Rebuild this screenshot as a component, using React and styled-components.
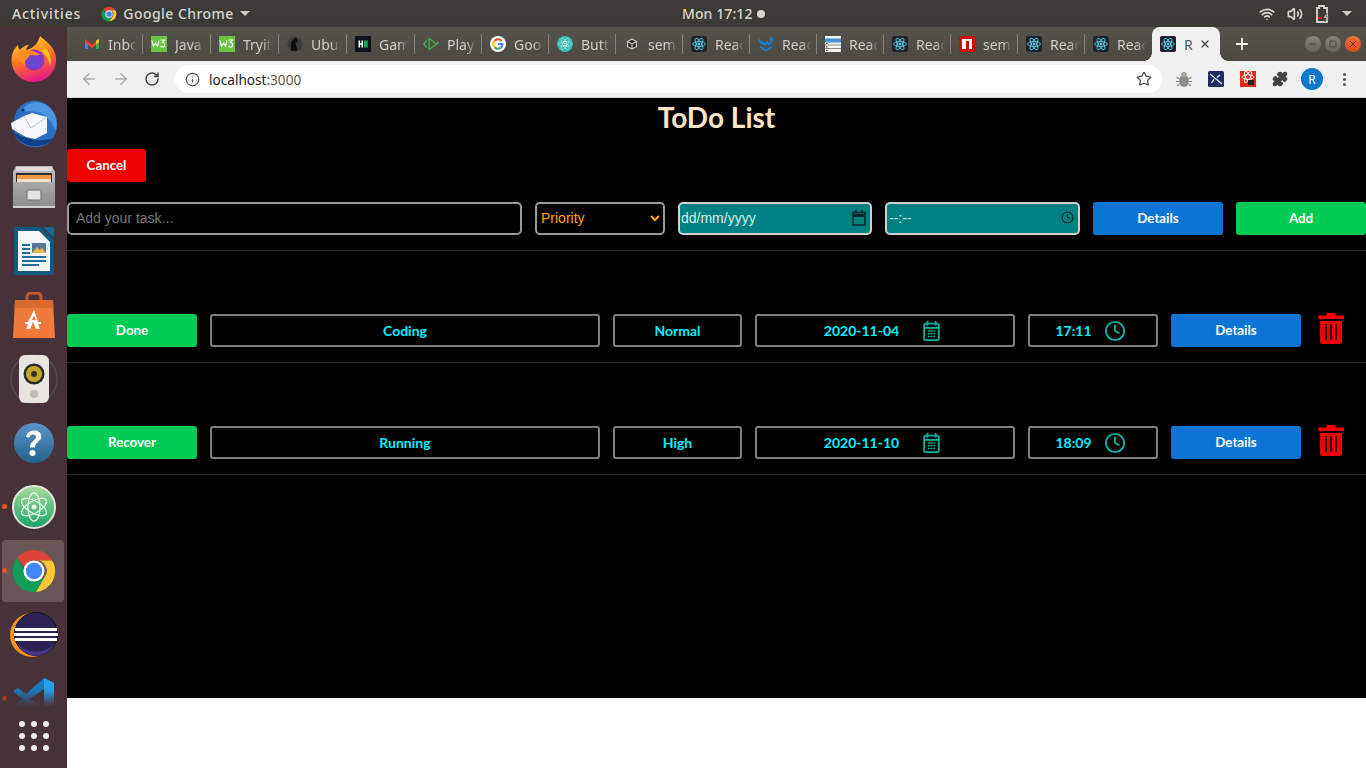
import React from 'react'
import styled, { createGlobalStyle } from 'styled-components'
import { ArrowLeft, ArrowRight, RotateCw, Info, Star, Puzzle, X, Plus, Minus, Square, Wifi, Volume2, Clock } from 'lucide-react'

const GlobalStyle = createGlobalStyle`
  html, body { margin: 0; padding: 0; background: #fff; overflow: hidden; }
  * { box-sizing: border-box; }
`

const Desktop = styled.div`
  width: 1366px;
  height: 768px;
  display: grid;
  grid-template-columns: 67px 1fr;
  grid-template-rows: 27px 1fr;
  overflow: hidden;
`
const TopBar = styled.header`
  grid-column: 1 / 3;
  display: flex;
  align-items: center;
  background: linear-gradient(#3d3c38, #3a3935);
  color: #d8d6d0;
  font: 500 14px "Noto Sans", sans-serif;
  letter-spacing: 0.45px;
`
const TopLeft = styled.div`
  flex: 0 0 682px;
  display: flex;
  align-items: center;
  padding-left: 12px;
`
const Activities = styled.span`
  letter-spacing: 0.9px;
`
const AppName = styled.div`
  display: flex;
  align-items: center;
  gap: 6px;
  margin-left: 20px;
`
const Caret = styled.span`
  width: 0;
  height: 0;
  border-left: 5px solid transparent;
  border-right: 5px solid transparent;
  border-top: 5px solid #d0cec8;
`
const ClockText = styled.div`
  display: flex;
  align-items: center;
  gap: 4px;
  letter-spacing: 0.1px;
`
const ClockDot = styled.span`
  width: 8px;
  height: 8px;
  border-radius: 50%;
  background: #d8d6d0;
`
const Tray = styled.div`
  margin-left: auto;
  display: flex;
  align-items: center;
  gap: 12px;
  padding-right: 14px;
  color: #d8d6d0;
`

const Dock = styled.nav`
  position: relative;
  display: flex;
  flex-direction: column;
  background: #48323a;
  overflow: hidden;
`
const DockItem = styled.div`
  position: relative;
  flex: 0 0 64px;
  display: flex;
  align-items: center;
  justify-content: center;
  &::before {
    content: '';
    position: absolute;
    inset: 1px 3px 1px 2px;
    border-radius: 4px;
    background: ${p => (p.$active ? '#6a5659' : 'transparent')};
  }
  &::after {
    content: '';
    position: absolute;
    left: 2px;
    top: 29px;
    width: 5px;
    height: 5px;
    border-radius: 50%;
    background: ${p => (p.$running ? '#e95420' : 'transparent')};
  }
  svg { position: relative; }
`
const DockFade = styled.div`
  position: absolute;
  left: 0;
  right: 0;
  bottom: 0;
  height: 78px;
  background: linear-gradient(rgba(72, 50, 58, 0), #48323a 16px);
  display: flex;
  align-items: center;
  justify-content: center;
  padding-top: 14px;
`
const AppGrid = styled.div`
  display: grid;
  grid-template-columns: repeat(3, 6px);
  gap: 6px;
`
const GridDot = styled.span`
  width: 6px;
  height: 6px;
  border-radius: 50%;
  background: #eeeceb;
`

const Browser = styled.div`
  display: flex;
  flex-direction: column;
  min-width: 0;
`
const TabStrip = styled.div`
  height: 34px;
  display: flex;
  align-items: center;
  padding-left: 9px;
  background: linear-gradient(#55534b, #4b4941);
`
const Tab = styled.div`
  position: relative;
  flex: 0 0 ${p => (p.$wide ? 68 : 67)}px;
  height: 34px;
  display: flex;
  align-items: center;
  gap: 8px;
  padding-left: 8px;
  color: #cfcdc8;
  font: 400 14px "Noto Sans", sans-serif;
  white-space: nowrap;
  overflow: hidden;
  &::after {
    content: '';
    position: absolute;
    right: 0;
    top: 7px;
    bottom: 7px;
    width: 1px;
    background: ${p => (p.$last ? 'transparent' : '#85837c')};
  }
  svg { flex: none; }
`
const TabTitle = styled.span`
  display: block;
  width: 29px;
  overflow: hidden;
  -webkit-mask-image: linear-gradient(90deg, #000 68%, transparent);
  mask-image: linear-gradient(90deg, #000 68%, transparent);
`
const ActiveTab = styled.div`
  position: relative;
  flex: 0 0 68px;
  height: 34px;
  display: flex;
  align-items: center;
  gap: 8px;
  padding-left: 8px;
  background: #f1f1f1;
  border-radius: 8px 8px 0 0;
  color: #555;
  font: 400 14px "Noto Sans", sans-serif;
  svg { flex: none; }
  &::before, &::after {
    content: '';
    position: absolute;
    bottom: 0;
    width: 8px;
    height: 8px;
  }
  &::before {
    left: -8px;
    background: radial-gradient(circle at 0 0, transparent 7.5px, #f1f1f1 8px);
  }
  &::after {
    right: -8px;
    background: radial-gradient(circle at 100% 0, transparent 7.5px, #f1f1f1 8px);
  }
`
const ActiveTitle = styled.span`
  width: 7px;
`
const NewTab = styled.div`
  display: flex;
  margin-left: 13px;
  color: #eeeeea;
`
const WindowButtons = styled.div`
  margin-left: auto;
  display: flex;
  gap: 4px;
  padding-right: 5px;
`
const WindowButton = styled.span`
  width: 16px;
  height: 16px;
  border-radius: 50%;
  display: flex;
  align-items: center;
  justify-content: center;
  background: ${p => (p.$close ? 'linear-gradient(#f0703c, #de4a14)' : 'linear-gradient(#85837c, #65635c)')};
  color: ${p => (p.$close ? '#5a2008' : '#3c3b37')};
`
const Toolbar = styled.div`
  height: 37px;
  display: flex;
  align-items: center;
  background: #f1f1f1;
  border-bottom: 1px solid #cfcfcf;
  padding-left: 13px;
`
const NavButton = styled.span`
  flex: 0 0 32px;
  display: flex;
  color: ${p => (p.$off ? '#a9a9a9' : '#4a4a4a')};
`
const Omnibox = styled.div`
  flex: 0 0 987px;
  height: 28px;
  margin-left: -1px;
  display: flex;
  align-items: center;
  gap: 9px;
  padding: 0 10px;
  border-radius: 14px;
  background: #fff;
  color: #555;
  font: 400 13.6px "Noto Sans", sans-serif;
`
const Host = styled.span`
  color: #222;
`
const Url = styled.span`
  flex: 1;
`
const Extensions = styled.div`
  display: flex;
  align-items: center;
  margin-left: 6px;
`
const ExtSlot = styled.span`
  flex: 0 0 32px;
  display: flex;
  align-items: center;
  justify-content: center;
`
const Avatar = styled.span`
  width: 22px;
  height: 22px;
  border-radius: 50%;
  background: #0b78d0;
  color: #fff;
  display: flex;
  align-items: center;
  justify-content: center;
  font: 400 12px "Noto Sans", sans-serif;
`
const Kebab = styled.span`
  display: grid;
  gap: 2px;
`
const KebabDot = styled.span`
  width: 3px;
  height: 3px;
  border-radius: 50%;
  background: #555;
`

const Page = styled.main`
  height: 600px;
  background: #000;
`
const Title = styled.h1`
  margin: 0;
  height: 39px;
  text-align: center;
  color: #ffe4c4;
  font: 700 28px/39px Lato, sans-serif;
`
const Button = styled.button`
  height: 33px;
  border: 0;
  border-radius: 3px;
  color: #fff;
  background: ${p => ({ red: '#ee0000', green: '#00cc55', blue: '#0a75d4' }[p.$tone])};
  font: 700 13.33px Lato, sans-serif;
  padding: 0 0 2px;
`
const CancelRow = styled.div`
  padding-top: 12px;
  display: flex;
`
const CancelButton = styled(Button)`
  width: 79px;
`
const TaskForm = styled.form`
  display: grid;
  grid-template-columns: 455px 130px 194px 195px 130px 130px;
  gap: 13px;
  margin: 20px 0 0;
  padding-bottom: 15px;
  border-bottom: 1px solid #222;
`
const TaskInput = styled.input`
  height: 33px;
  padding: 0 7px 2px;
  background: #000;
  border: 2px solid #9a9a9a;
  border-radius: 5px;
  color: #fff;
  font: 400 14px "Liberation Sans", sans-serif;
  &::placeholder { color: #757575; opacity: 1; }
`
const PrioritySelect = styled.select`
  height: 33px;
  padding: 0 0 2px;
  background: #000;
  border: 2px solid #9a9a9a;
  border-radius: 5px;
  color: #ffa500;
  font: 400 14px "Liberation Sans", sans-serif;
`
const PickerField = styled.div`
  height: 33px;
  display: flex;
  align-items: center;
  justify-content: space-between;
  padding: 0 4px 2px ${p => p.$pad}px;
  background: #008080;
  border: 2px solid #d0d0d0;
  border-radius: 5px;
  color: #d5eeee;
  font: 400 14px "Liberation Sans", sans-serif;
`
const TaskRow = styled.div`
  display: grid;
  grid-template-columns: 130px 390px 129px 260px 130px 130px 1fr;
  gap: 13px;
  align-items: center;
  padding: 63px 0 15px;
  border-bottom: 1px solid #222;
`
const Cell = styled.div`
  height: 33px;
  display: flex;
  align-items: center;
  justify-content: center;
  gap: ${p => p.$gap || 0}px;
  padding-right: ${p => (p.$gap ? 5 : 0)}px;
  border: 2px solid #808080;
  border-radius: 3px;
  color: #00f0ff;
  font: 700 14px Lato, sans-serif;
`
const TrashButton = styled.span`
  display: flex;
  margin: -5px 0 0 4px;
`

const ReactIcon = () => (
  <svg width="16" height="16" viewBox="0 0 16 16">
    <rect width="16" height="16" rx="2" fill="#20232a" />
    <g fill="none" stroke="#61dafb" strokeWidth=".8">
      <ellipse cx="8" cy="8" rx="6.4" ry="2.5" />
      <ellipse cx="8" cy="8" rx="6.4" ry="2.5" transform="rotate(60 8 8)" />
      <ellipse cx="8" cy="8" rx="6.4" ry="2.5" transform="rotate(120 8 8)" />
    </g>
    <circle cx="8" cy="8" r="1.3" fill="#61dafb" />
  </svg>
)
const GmailIcon = () => (
  <svg width="16" height="16" viewBox="0 0 16 16">
    <path d="M1 3v10h3V7z" fill="#4285f4" />
    <path d="M15 3v10h-3V7z" fill="#34a853" />
    <path d="M1 3l7 5.5L15 3v3.5L8 12 1 6.500z" fill="#ea4335" />
    <path d="M12 4.500L15 3v3.500l-3 2.200z" fill="#fbbc04" />
  </svg>
)
const W3Icon = () => (
  <svg width="16" height="16" viewBox="0 0 16 16">
    <rect width="16" height="16" fill="#6ac43f" />
    <path d="M1 4.500c.5 3 1 4 1.500 5.500L4.500 7l2 3 1.500-5.500M9.500 4h4l-2 2.500c3 0 2.800 5-.2 4.500-.8-.1-1.500-.6-1.800-1.300" fill="none" stroke="#fff" strokeWidth="1.200" />
  </svg>
)
const UbuIcon = () => (
  <svg width="16" height="16" viewBox="0 0 16 16">
    <circle cx="8" cy="8" r="7.500" fill="#3a3a38" />
    <path d="M4 15c.5-4-1-7 1-10 1.500-2.500 4-3.500 5-2.500-.5 1 .5 2 1 3.500-1 .5-2 0-2.500.5-.5 2 2 5 2 8z" fill="#0c0c0c" />
  </svg>
)
const HackIcon = () => (
  <svg width="16" height="16" viewBox="0 0 16 16">
    <rect width="16" height="16" fill="#0e141e" />
    <path d="M3.500 4.500h1.600v2.700h1.400V4.500h1.600v7H6.500V8.800H5.100v2.700H3.500z" fill="#fff" />
    <rect x="9" y="4.500" width="3.800" height="7" fill="#1ba94c" />
  </svg>
)
const PlayIcon = () => (
  <svg width="16" height="16" viewBox="0 0 16 16" fill="none" stroke="#4caf50" strokeWidth="1.300">
    <path d="M3.500 4.500L.8 8l2.700 3.500" />
    <path d="M6 2.500v11L13.500 8zM15.500 6l-1.500 2" />
  </svg>
)
const GoogleIcon = () => (
  <svg width="16" height="16" viewBox="0 0 16 16">
    <circle cx="8" cy="8" r="8" fill="#fff" />
    <g fill="none" strokeWidth="2">
      <path d="M11.600 5a4.500 4.500 0 0 0-7-.2" stroke="#ea4335" />
      <path d="M4.600 4.800a4.500 4.500 0 0 0 0 6.400" stroke="#fbbc04" />
      <path d="M4.600 11.200a4.500 4.500 0 0 0 6.200.4" stroke="#34a853" />
      <path d="M8 8h4.500c0 1.500-.6 2.800-1.700 3.600" stroke="#4285f4" />
    </g>
  </svg>
)
const SemanticIcon = () => (
  <svg width="16" height="16" viewBox="0 0 16 16">
    <circle cx="8" cy="8" r="8" fill="#35bdb2" />
    <g fill="none" stroke="#a5e8e2" strokeWidth=".6">
      <ellipse cx="8" cy="8" rx="6.500" ry="2.500" />
      <ellipse cx="8" cy="8" rx="6.500" ry="2.500" transform="rotate(60 8 8)" />
      <ellipse cx="8" cy="8" rx="6.500" ry="2.500" transform="rotate(120 8 8)" />
    </g>
    <path d="M10 6c-1.500-1.200-3.800-.8-3.500.6.300 1.300 3.500.8 3.400 2.300-.1 1.400-2.700 1.500-4 .2" fill="none" stroke="#fff" strokeWidth="1" />
  </svg>
)
const CubeIcon = () => (
  <svg width="16" height="16" viewBox="0 0 16 16">
    <path d="M8 3l4.500 2.500v5L8 13l-4.500-2.500v-5z" fill="#2c2c2a" stroke="#ccc" strokeWidth="1.100" />
    <path d="M3.500 5.500L8 8l4.500-2.500M8 8v5" fill="none" stroke="#ccc" strokeWidth="1.100" />
  </svg>
)
const MuiIcon = () => (
  <svg width="16" height="16" viewBox="0 0 16 16" fill="#0f7fd6">
    <path d="M0 2.500l3 2v3L0 5.500zM3 4.500l3.500 2.500v3L3 7.500zM10 7l4-3v3l-4 3zM6.500 7L10 4.500v3L6.500 10zM12 1.500h3v3h-3zM2 9.500L8 13.500l6-4v2.200l-6 3.800-6-3.800z" />
  </svg>
)
const TableIcon = () => (
  <svg width="16" height="16" viewBox="0 0 16 16">
    <rect width="16" height="16" fill="#f5f5f5" />
    <rect y="2.500" width="16" height="4" fill="#4a90d9" />
    <rect y="8.500" width="16" height="1" fill="#888" />
    <rect y="12" width="16" height="1" fill="#888" />
    <rect x="1" y="7" width="1.500" height="1" fill="#333" />
    <rect x="1" y="10.500" width="1.500" height="1" fill="#333" />
    <rect x="1" y="14" width="1.500" height="1" fill="#333" />
  </svg>
)
const NpmIcon = () => (
  <svg width="16" height="16" viewBox="0 0 16 16">
    <rect width="16" height="16" fill="#cb0f0f" />
    <rect x="3" y="3" width="10" height="10" fill="#fff" />
    <rect x="7" y="5" width="3" height="8" fill="#cb0f0f" />
  </svg>
)
const ChromeIcon = ({ size = 16 }) => (
  <svg width={size} height={size} viewBox="0 0 48 48">
    <path d="M24 2a22 22 0 0 1 19 11H24a11 11 0 0 0-10 6.500L6.500 10.500A22 22 0 0 1 24 2z" fill="#db4437" />
    <path d="M26 46A22 22 0 0 1 6.500 10.500L15 26a11 11 0 0 0 11 9l8.500-4z" fill="#0f9d58" />
    <path d="M24 13h19a22 22 0 0 1-17 33l9-15.500A11 11 0 0 0 24 13z" fill="#fcc934" />
    <circle cx="24" cy="24" r="11" fill="#fff" />
    <circle cx="24" cy="24" r="8.500" fill="#4285f4" />
  </svg>
)
const BugIcon = () => (
  <svg width="18" height="18" viewBox="0 0 18 18" fill="#8a8a86">
    <ellipse cx="9" cy="11" rx="5" ry="6" />
    <circle cx="9" cy="4.500" r="2.800" fill="#a5a5a0" />
    <path d="M1.500 7l3 2M16.500 7l-3 2M1 11.500h3M17 11.500h-3M2 16l2.500-2M16 16l-2.500-2" stroke="#8a8a86" strokeWidth="1.200" />
  </svg>
)
const PlaneExt = () => (
  <svg width="16" height="16" viewBox="0 0 16 16">
    <rect width="16" height="16" rx="1.500" fill="#1a2f63" />
    <path d="M2 3l12 10M6 8L3.500 12M9 6.500l3-2.500" stroke="#e9edf5" strokeWidth="1.200" />
  </svg>
)
const RedExt = () => (
  <svg width="16" height="16" viewBox="0 0 16 16">
    <rect width="16" height="16" fill="#e4291c" />
    <g fill="none" stroke="#fff" strokeWidth=".9">
      <ellipse cx="8" cy="6" rx="6" ry="2.400" />
      <ellipse cx="8" cy="6" rx="6" ry="2.400" transform="rotate(60 8 6)" />
      <ellipse cx="8" cy="6" rx="6" ry="2.400" transform="rotate(120 8 6)" />
    </g>
    <rect x="8" y="9" width="6" height="5" fill="#222" />
  </svg>
)
const BatteryIcon = () => (
  <svg width="15" height="18" viewBox="0 0 15 18">
    <path d="M4 1h5v2h3v14H2V3h2z" fill="none" stroke="#d8d6d0" strokeWidth="1.800" />
    <rect x="3" y="12" width="4" height="2" fill="#e01b24" />
    <path d="M12 8l-4 5h3l-1 4 4-5h-3z" fill="#d8d6d0" stroke="#3b3a36" strokeWidth=".5" />
  </svg>
)

const FirefoxDock = () => (
  <svg width="46" height="46" viewBox="0 0 46 46">
    <defs>
      <linearGradient id="ffA" x1="0.300" y1="0" x2="0.600" y2="1">
        <stop offset="0" stopColor="#ffe226" />
        <stop offset=".45" stopColor="#ff7a1f" />
        <stop offset="1" stopColor="#e3158a" />
      </linearGradient>
      <radialGradient id="ffB" cx=".5" cy=".6" r=".6">
        <stop offset="0" stopColor="#5a4fd6" />
        <stop offset="1" stopColor="#9a2fc0" />
      </radialGradient>
    </defs>
    <path d="M29 0c5 5 15 10 16 22 1 13-9 24-22 24S0 36 .5 23C1 17 3 13 7 9c0 3 1 4 2 5 2-3 6-5 9-5-2 2-3 4-3 5 6-1 12-6 14-14z" fill="url(#ffA)" />
    <circle cx="23" cy="24" r="10.500" fill="url(#ffB)" />
    <path d="M7 18c4-4 11-5 15-3 3 1 5 3 8 3-3 2-8 1-10 1-1 0-3 1-3 3-3 2-4 5-2 8-5-3-9-7-8-12z" fill="#ff8a1f" />
    <path d="M34 12c5 4 7 11 5 18-1-6-4-12-9-15z" fill="#ffc51f" />
  </svg>
)
const ThunderbirdDock = () => (
  <svg width="48" height="50" viewBox="0 0 48 50">
    <path d="M4 24C4 10 16 1 28 3c10 2 19 11 19 22 0 8-3 16-9 21-8 5-24 5-32-6-2-4-2-11-2-16z" fill="#2a6fc4" />
    <path d="M12 12C18 3 32 1 41 11c5 6 7 14 5 22-4-9-10-17-20-19-6-1-10 0-14-2z" fill="#4d96e0" />
    <path d="M2 32c3 9 12 16 22 16 8 0 14-1 20-8-12 4-30 3-42-8z" fill="#123e82" />
    <path d="M1 25l13-7 8-3 15 4 0 16-12 6-9-2-14-8z" fill="#f6f7fb" />
    <path d="M14 18l7 12 16-11" fill="none" stroke="#b9c4d8" strokeWidth="1" />
    <circle cx="13" cy="12" r="1.500" fill="#0e2a55" />
  </svg>
)
const FilesDock = () => (
  <svg width="42" height="44" viewBox="0 0 42 44">
    <defs>
      <linearGradient id="filesFront" x1="0" y1="0" x2="0" y2="1">
        <stop offset="0" stopColor="#a9a9a7" />
        <stop offset="1" stopColor="#8c8c8a" />
      </linearGradient>
    </defs>
    <path d="M3 1h36l3 6v34H0V7z" fill="#b8b8b6" />
    <rect x="3" y="2" width="36" height="4" fill="#dcdcda" />
    <rect x="3" y="8" width="36" height="9" fill="#2b2b2b" />
    <rect x="4" y="10" width="34" height="7" fill="#ef9a4b" />
    <rect x="4" y="14" width="34" height="3" fill="#f6e3c8" />
    <rect x="0" y="17" width="42" height="26" rx="2" fill="url(#filesFront)" />
    <rect x="14" y="25" width="14" height="10" rx="1.500" fill="#e2e2e0" stroke="#6c6c6a" />
    <rect x="0" y="41" width="42" height="2" fill="#d0d0ce" />
  </svg>
)
const WriterDock = () => (
  <svg width="40" height="48" viewBox="0 0 40 48">
    <path d="M1 0h26l13 13v33a2 2 0 0 1-2 2H2a2 2 0 0 1-2-2V1z" fill="#0f5a80" />
    <path d="M4 4h21l11 11v29H4z" fill="#f4f6f8" />
    <path d="M29 0h9a2 2 0 0 1 2 2v9z" fill="#16689a" />
    <path d="M8 17h8v2H8zM8 21h8v2H8zM8 25h8v2H8zM8 29h24v2H8zM8 33h24v2H8zM8 37h17v2H8z" fill="#1b6f99" />
    <rect x="18" y="16" width="14" height="10" fill="#557a9c" />
    <path d="M18 26l5-6 3 3 2-2 4 5z" fill="#e9b949" />
  </svg>
)
const SoftwareDock = () => (
  <svg width="42" height="46" viewBox="0 0 42 46">
    <path d="M14 10V5a4 4 0 0 1 4-4h6a4 4 0 0 1 4 4v5" fill="none" stroke="#c85a2b" strokeWidth="3" />
    <path d="M2 8h38l2 38H0z" fill="#ef7a3c" />
    <path d="M2 8h38l.5 8H1.500z" fill="#d96a30" />
    <path d="M21 18l-6 12h-3v2h3l-2 5h4l3-7 3 7h4l-2-5h3v-2h-3zM19 28l2-4 2 4z" fill="#fff" />
  </svg>
)
const SpeakerDock = () => (
  <svg width="48" height="50" viewBox="0 0 48 50">
    <ellipse cx="24" cy="25" rx="23" ry="24" fill="none" stroke="#5d5870" strokeWidth="1.500" opacity=".6" />
    <rect x="9" y="1" width="30" height="48" rx="6" fill="#e7e6e0" />
    <circle cx="24" cy="20" r="10.500" fill="#2b2a26" />
    <circle cx="24" cy="20" r="8" fill="#c2a72b" />
    <circle cx="24" cy="20" r="3" fill="#35332c" />
    <circle cx="24" cy="40" r="4" fill="#bdbcb6" />
  </svg>
)
const HelpDock = () => (
  <svg width="42" height="42" viewBox="0 0 42 42">
    <defs>
      <linearGradient id="help" x1="0" y1="0" x2="0" y2="1">
        <stop offset="0" stopColor="#5d94c7" />
        <stop offset="1" stopColor="#23628f" />
      </linearGradient>
    </defs>
    <circle cx="21" cy="21" r="20" fill="url(#help)" />
    <path d="M13 15c1-5 5-7 9-6.500 5 .5 7 4 6 8-1 3-6 4-6 9h-5c0-6 5-7 6-10 .5-2-1-3-3-3-2 0-3 1-3.500 3z" fill="#fff" />
    <circle cx="19.500" cy="31" r="3" fill="#fff" />
  </svg>
)
const AtomDock = () => (
  <svg width="44" height="44" viewBox="0 0 44 44">
    <defs>
      <linearGradient id="atom" x1="0" y1="0" x2="0" y2="1">
        <stop offset="0" stopColor="#a7dd9d" />
        <stop offset="1" stopColor="#17a466" />
      </linearGradient>
    </defs>
    <circle cx="22" cy="22" r="21" fill="url(#atom)" stroke="#e5e5dd" strokeWidth="2" />
    <g fill="none" stroke="#eaf7e8" strokeWidth="1.300">
      <ellipse cx="22" cy="22" rx="14" ry="6" transform="rotate(30 22 22)" />
      <ellipse cx="22" cy="22" rx="14" ry="6" transform="rotate(90 22 22)" />
      <ellipse cx="22" cy="22" rx="14" ry="6" transform="rotate(150 22 22)" />
    </g>
    <circle cx="22" cy="22" r="2.500" fill="#eaf7e8" />
  </svg>
)
const EclipseDock = () => (
  <svg width="48" height="46" viewBox="0 0 48 46">
    <circle cx="22" cy="23" r="22" fill="#f7941e" />
    <circle cx="26" cy="22" r="21.500" fill="#2c2255" stroke="#111" />
    <path d="M7 30a20 20 0 0 0 38 0 20 14 0 0 1-38 0z" fill="#473788" />
    <path d="M5 16h42v3H5zM4 21h44v3H4zM5 26h42v3H5z" fill="#fff" />
  </svg>
)
const VSCodeDock = () => (
  <svg width="44" height="44" viewBox="0 0 44 44">
    <path d="M32 1l10 5v34l-10 4-18-17-8 6-5-3 9-8-9-8 5-3 8 6z" fill="#1a78bd" />
    <path d="M32 1l10 5v34l-10 4z" fill="#2b9de8" />
    <path d="M32 12L18 22l14 10z" fill="#48323a" />
  </svg>
)
const CalendarIcon = () => (
  <svg width="19" height="22" viewBox="0 0 20 24" fill="none" stroke="#00b5a5" strokeWidth="2">
    <rect x="2" y="4" width="16" height="18" rx="1.500" />
    <path d="M5.500 1v5M14.500 1v5M2 8.500h16" />
    <path d="M6 12h2M9 12h2M12 12h2M6 15h2M9 15h2M12 15h2M6 18h2M9 18h2M12 18h2" strokeWidth="1.600" />
  </svg>
)
const PickerCalendar = () => (
  <svg width="14" height="16" viewBox="0 0 14 16" fill="none" stroke="#04292c" strokeWidth="1.600">
    <rect x="1" y="2.500" width="12" height="12.500" />
    <path d="M1 5.500h12" strokeWidth="3" />
    <path d="M4 0v3M10 0v3" />
  </svg>
)
const TrashIcon = () => (
  <svg width="26" height="31" viewBox="0 0 26 31">
    <path d="M9 0h8l1 2.500h7a1 1 0 0 1 1 1V6H0V3.500a1 1 0 0 1 1-1h7z" fill="#ee0000" />
    <path d="M2 8h22v20.500a2.500 2.500 0 0 1-2.500 2.500h-17A2.500 2.500 0 0 1 2 28.500z" fill="#ee0000" />
    <path d="M8 11v16M13 11v16M18 11v16" stroke="#000" strokeWidth="1.600" />
  </svg>
)

const tabs = [
  { title: 'Inbox', Icon: GmailIcon },
  { title: 'Java', Icon: W3Icon, wide: true },
  { title: 'Tryit', Icon: W3Icon, wide: true },
  { title: 'Ubuntu', Icon: UbuIcon, wide: true },
  { title: 'Game', Icon: HackIcon, wide: true },
  { title: 'Play', Icon: PlayIcon },
  { title: 'Google', Icon: GoogleIcon },
  { title: 'Button', Icon: SemanticIcon },
  { title: 'semantic', Icon: CubeIcon },
  { title: 'React', Icon: ReactIcon },
  { title: 'React', Icon: MuiIcon },
  { title: 'React', Icon: TableIcon },
  { title: 'React', Icon: ReactIcon },
  { title: 'semantic', Icon: NpmIcon },
  { title: 'React', Icon: ReactIcon },
  { title: 'React', Icon: ReactIcon, last: true },
]

const dockApps = [
  { Icon: FirefoxDock },
  { Icon: ThunderbirdDock },
  { Icon: FilesDock },
  { Icon: WriterDock },
  { Icon: SoftwareDock },
  { Icon: SpeakerDock },
  { Icon: HelpDock },
  { Icon: AtomDock, running: true },
  { Icon: () => <ChromeIcon size={46} />, running: true, active: true },
  { Icon: EclipseDock },
  { Icon: VSCodeDock, running: true },
]

const tasks = [
  { action: 'Done', name: 'Coding', priority: 'Normal', date: '2020-11-04', time: '17:11' },
  { action: 'Recover', name: 'Running', priority: 'High', date: '2020-11-10', time: '18:09' },
]

const TaskLine = ({ action, name, priority, date, time }) => (
  <TaskRow>
    <Button $tone="green">{action}</Button>
    <Cell>{name}</Cell>
    <Cell>{priority}</Cell>
    <Cell $gap={23}>{date}<CalendarIcon /></Cell>
    <Cell $gap={12}>{time}<Clock size={22} color="#00b5a5" strokeWidth={2} /></Cell>
    <Button $tone="blue">Details</Button>
    <TrashButton><TrashIcon /></TrashButton>
  </TaskRow>
)

const App = () => (
  <Desktop>
    <GlobalStyle />
    <TopBar>
      <TopLeft>
        <Activities>Activities</Activities>
        <AppName>
          <ChromeIcon size={16} />
          Google Chrome
          <Caret />
        </AppName>
      </TopLeft>
      <ClockText>Mon 17:12 <ClockDot /></ClockText>
      <Tray>
        <Wifi size={16} strokeWidth={2.5} />
        <Volume2 size={16} strokeWidth={2.5} />
        <BatteryIcon />
        <Caret />
      </Tray>
    </TopBar>

    <Dock>
      {dockApps.map(({ Icon, running, active }, i) => (
        <DockItem key={i} $running={running} $active={active}><Icon /></DockItem>
      ))}
      <DockFade>
        <AppGrid>
          {Array.from({ length: 9 }, (_, i) => <GridDot key={i} />)}
        </AppGrid>
      </DockFade>
    </Dock>

    <Browser>
      <TabStrip>
        {tabs.map(({ title, Icon, last, wide }, i) => (
          <Tab key={i} $last={last} $wide={wide}>
            <Icon />
            <TabTitle>{title}</TabTitle>
          </Tab>
        ))}
        <ActiveTab>
          <ReactIcon />
          <ActiveTitle>R</ActiveTitle>
          <X size={12} color="#444" strokeWidth={2.5} />
        </ActiveTab>
        <NewTab><Plus size={18} strokeWidth={2.5} /></NewTab>
        <WindowButtons>
          <WindowButton><Minus size={10} /></WindowButton>
          <WindowButton><Square size={8} /></WindowButton>
          <WindowButton $close><X size={10} /></WindowButton>
        </WindowButtons>
      </TabStrip>

      <Toolbar>
        <NavButton $off><ArrowLeft size={18} /></NavButton>
        <NavButton $off><ArrowRight size={18} /></NavButton>
        <NavButton><RotateCw size={16} strokeWidth={2.4} /></NavButton>
        <Omnibox>
          <Info size={15} />
          <Url><Host>localhost</Host>:3000</Url>
          <Star size={16} />
        </Omnibox>
        <Extensions>
          <ExtSlot><BugIcon /></ExtSlot>
          <ExtSlot><PlaneExt /></ExtSlot>
          <ExtSlot><RedExt /></ExtSlot>
          <ExtSlot><Puzzle size={16} fill="#444" color="#444" /></ExtSlot>
          <ExtSlot><Avatar>R</Avatar></ExtSlot>
          <ExtSlot><Kebab><KebabDot /><KebabDot /><KebabDot /></Kebab></ExtSlot>
        </Extensions>
      </Toolbar>

      <Page>
        <Title>ToDo List</Title>
        <CancelRow><CancelButton $tone="red">Cancel</CancelButton></CancelRow>
        <TaskForm>
          <TaskInput placeholder="Add your task..." />
          <PrioritySelect defaultValue="">
            <option value="" disabled>Priority</option>
            <option>Normal</option>
            <option>High</option>
          </PrioritySelect>
          <PickerField $pad={1}>dd/mm/yyyy<PickerCalendar /></PickerField>
          <PickerField $pad={2}>--:--<Clock size={13} color="#04292c" strokeWidth={2} /></PickerField>
          <Button type="button" $tone="blue">Details</Button>
          <Button type="button" $tone="green">Add</Button>
        </TaskForm>
        {tasks.map((task) => <TaskLine key={task.name} {...task} />)}
      </Page>
    </Browser>
  </Desktop>
)

export default App
